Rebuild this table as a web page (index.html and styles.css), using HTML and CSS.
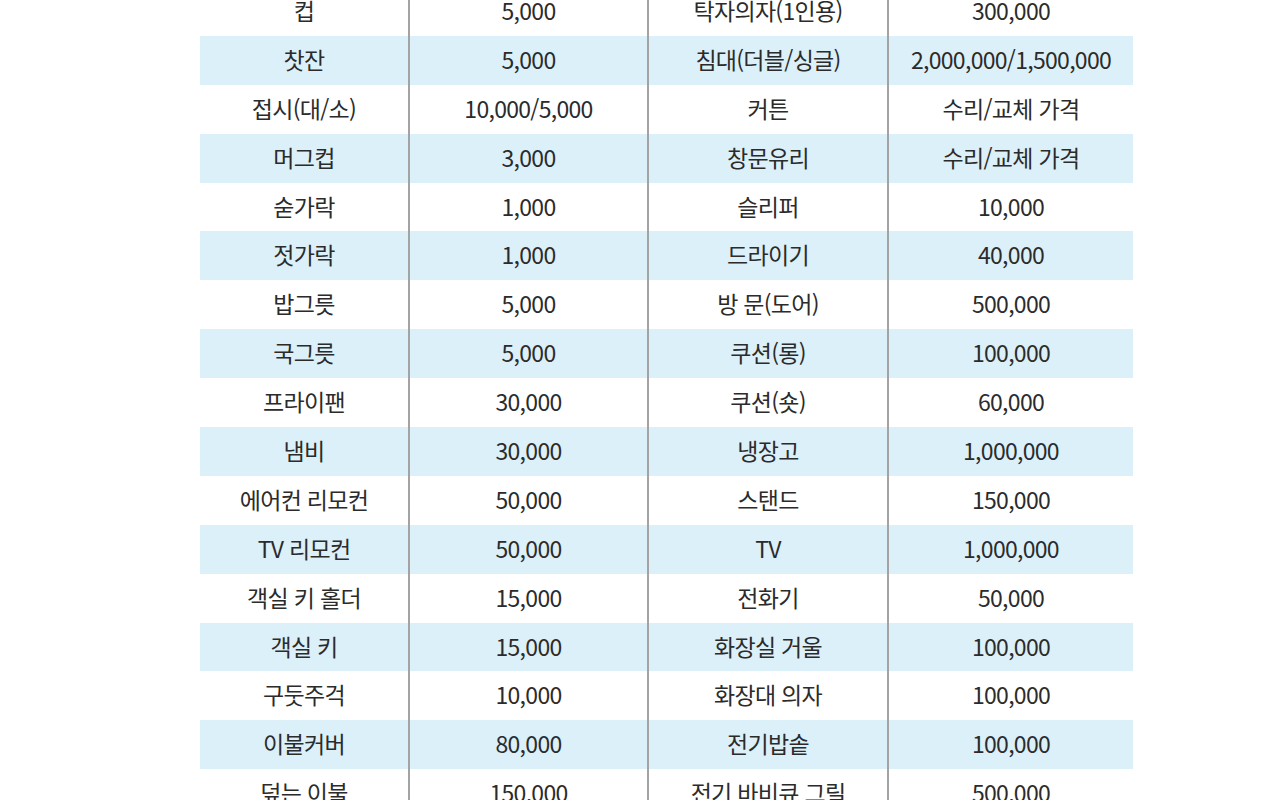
FILE: index.html
```html
<!DOCTYPE html>
<html lang="ko">
<head>
<meta charset="utf-8">
<link rel="stylesheet" href="styles.css">
</head>
<body>
<div class="sheet">
  <div class="row"><div class="c">컵</div><div class="c">5,000</div><div class="c">탁자의자(1인용)</div><div class="c">300,000</div></div>
  <div class="row band"><div class="c">찻잔</div><div class="c">5,000</div><div class="c">침대(더블/싱글)</div><div class="c">2,000,000/1,500,000</div></div>
  <div class="row"><div class="c">접시(대/소)</div><div class="c">10,000/5,000</div><div class="c">커튼</div><div class="c">수리/교체 가격</div></div>
  <div class="row band"><div class="c">머그컵</div><div class="c">3,000</div><div class="c">창문유리</div><div class="c">수리/교체 가격</div></div>
  <div class="row"><div class="c">숟가락</div><div class="c">1,000</div><div class="c">슬리퍼</div><div class="c">10,000</div></div>
  <div class="row band"><div class="c">젓가락</div><div class="c">1,000</div><div class="c">드라이기</div><div class="c">40,000</div></div>
  <div class="row"><div class="c">밥그릇</div><div class="c">5,000</div><div class="c">방 문(도어)</div><div class="c">500,000</div></div>
  <div class="row band"><div class="c">국그릇</div><div class="c">5,000</div><div class="c">쿠션(롱)</div><div class="c">100,000</div></div>
  <div class="row"><div class="c">프라이팬</div><div class="c">30,000</div><div class="c">쿠션(숏)</div><div class="c">60,000</div></div>
  <div class="row band"><div class="c">냄비</div><div class="c">30,000</div><div class="c">냉장고</div><div class="c">1,000,000</div></div>
  <div class="row"><div class="c">에어컨 리모컨</div><div class="c">50,000</div><div class="c">스탠드</div><div class="c">150,000</div></div>
  <div class="row band"><div class="c">TV 리모컨</div><div class="c">50,000</div><div class="c">TV</div><div class="c">1,000,000</div></div>
  <div class="row"><div class="c">객실 키 홀더</div><div class="c">15,000</div><div class="c">전화기</div><div class="c">50,000</div></div>
  <div class="row band"><div class="c">객실 키</div><div class="c">15,000</div><div class="c">화장실 거울</div><div class="c">100,000</div></div>
  <div class="row"><div class="c">구둣주걱</div><div class="c">10,000</div><div class="c">화장대 의자</div><div class="c">100,000</div></div>
  <div class="row band"><div class="c">이불커버</div><div class="c">80,000</div><div class="c">전기밥솥</div><div class="c">100,000</div></div>
  <div class="row"><div class="c">덮는 이불</div><div class="c">150,000</div><div class="c">전기 바비큐 그릴</div><div class="c">500,000</div></div>
</div>
</body>
</html>
```
FILE: styles.css
```css
html, body {
  margin: 0;
  padding: 0;
  background: #ffffff;
  overflow: hidden;
  height: 800px;
}
.sheet {
  margin: -13px 0 0 200px;
  width: 933px;
}
.row {
  display: grid;
  grid-template-columns: 210px 239px 240px 244px;
  height: 48.9px;
}
.row.band {
  background: #dcf0fa;
}
.c {
  box-sizing: border-box;
  display: flex;
  align-items: center;
  justify-content: center;
  font-family: "Noto Sans CJK KR", "Noto Sans", sans-serif;
  font-size: 23px;
  letter-spacing: -0.7px;
  color: #2b2b2b;
  white-space: nowrap;
  padding-bottom: 3px;
}
.c:nth-child(1), .c:nth-child(2), .c:nth-child(3) {
  border-right: 2px solid #a3a3a3;
}
```
